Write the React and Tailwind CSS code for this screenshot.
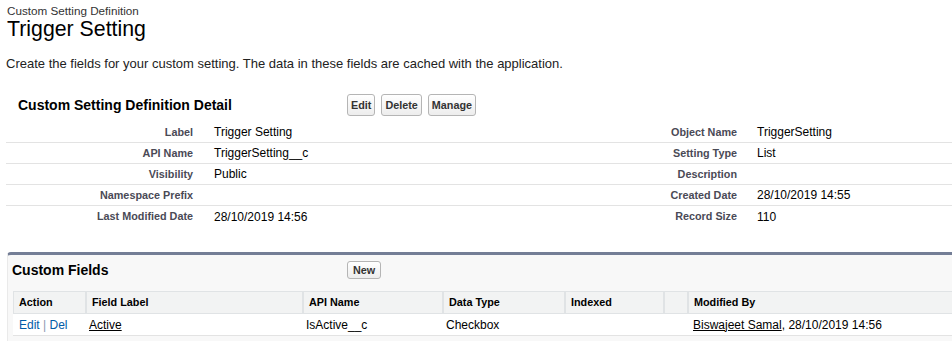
import React from "react";

const details = [
  ["Label", "Trigger Setting", "Object Name", "TriggerSetting"],
  ["API Name", "TriggerSetting__c", "Setting Type", "List"],
  ["Visibility", "Public", "Description", ""],
  ["Namespace Prefix", "", "Created Date", "28/10/2019 14:55"],
  ["Last Modified Date", "28/10/2019 14:56", "Record Size", "110"],
];

const columns = [
  { title: "Action", w: "w-[72px]" },
  { title: "Field Label", w: "w-[217px]" },
  { title: "API Name", w: "w-[140px]" },
  { title: "Data Type", w: "w-[122px]" },
  { title: "Indexed", w: "w-[99px]" },
  { title: "", w: "w-[24px]" },
  { title: "Modified By", w: "flex-1" },
];

function Btn({ children, small }) {
  return (
    <button
      className={
        "border border-[#b5b5b5] rounded-[3px] bg-gradient-to-b from-white to-[#ededed] text-[#333] font-bold text-[10.8px] leading-none " +
        (small ? "h-[18px] px-[5px]" : "h-[22px] px-[3px]")
      }
    >
      {children}
    </button>
  );
}

export default function App() {
  return (
    <div className="w-full h-[341px] overflow-hidden bg-white text-black font-['Liberation_Sans',Arial,sans-serif]">
      <div className="pt-[4px] pl-[7px]">
        <div className="text-[11.7px] leading-[13px] text-[#333]">Custom Setting Definition</div>
        <h1 className="text-[21.3px] leading-[24px] text-black">Trigger Setting</h1>
      </div>
      <p className="mt-[15px] pl-[6px] text-[13px] leading-[16px] text-[#222]">
        Create the fields for your custom setting. The data in these fields are cached with the application.
      </p>

      {/* detail block */}
      <div className="mt-[22px] ml-[6px]">
        <div className="flex items-center h-[22px]">
          <h2 className="w-[341px] pl-[12px] text-[14px] font-bold leading-none">
            Custom Setting Definition Detail
          </h2>
          <div className="flex gap-[6px]">
            <Btn>Edit</Btn>
            <Btn>Delete</Btn>
            <Btn>Manage</Btn>
          </div>
        </div>
        <div className="mt-[6px]">
          {details.map((r, i) => (
            <div
              key={i}
              className={
                "grid grid-cols-[194px_350px_194px_1fr] items-center h-[21px] " +
                (i < details.length - 1 ? "border-b border-[#e3e3e3]" : "")
              }
            >
              <div className="text-right pr-[7px] text-[10.8px] font-bold text-[#4a4a56]">{r[0]}</div>
              <div className="pl-[14px] text-[12px]">{r[1]}</div>
              <div className="text-right pr-[7px] text-[10.8px] font-bold text-[#4a4a56]">{r[2]}</div>
              <div className="pl-[13px] text-[12px]">{r[3]}</div>
            </div>
          ))}
        </div>
      </div>

      {/* custom fields related list */}
      <div className="mt-[25px] ml-[7px] mr-[-10px] border-t-[3px] border-t-[#747e96] border-l border-l-[#eaeaea] rounded-tl-[4px] bg-[#f8f8f8] h-[200px]">
        <div className="flex items-center mt-[6px] h-[18px] pl-[4px]">
          <h3 className="w-[335px] text-[14px] font-bold leading-none">Custom Fields</h3>
          <Btn small>New</Btn>
        </div>
        <div className="mt-[12px] ml-[5px] bg-white border-t border-[#e0e3e5]">
          <div className="flex h-[22px] bg-[#f2f3f3] border-b border-[#e0e3e5]">
            {columns.map((c, i) => (
              <div
                key={i}
                className={
                  c.w +
                  " flex items-center pl-[5px] text-[10.8px] font-bold text-black " +
                  (i > 0 ? "border-l-2 border-[#e0e3e5]" : "border-l border-[#e0e3e5]")
                }
              >
                {c.title}
              </div>
            ))}
          </div>
          <div className="flex h-[22px] items-center border-b border-[#e3e3e3] text-[12px]">
            <div className="w-[72px] pl-[6px] text-[#015ba7]">
              Edit <span className="text-[#8a99b0]">|</span> Del
            </div>
            <div className="w-[217px] pl-[4px]">
              <span className="underline">Active</span>
            </div>
            <div className="w-[140px] pl-[4px]">IsActive__c</div>
            <div className="w-[122px] pl-[4px]">Checkbox</div>
            <div className="w-[99px]"></div>
            <div className="w-[24px]"></div>
            <div className="flex-1 pl-[6px]">
              <span className="underline">Biswajeet Samal</span>, 28/10/2019 14:56
            </div>
          </div>
        </div>
      </div>
    </div>
  );
}
